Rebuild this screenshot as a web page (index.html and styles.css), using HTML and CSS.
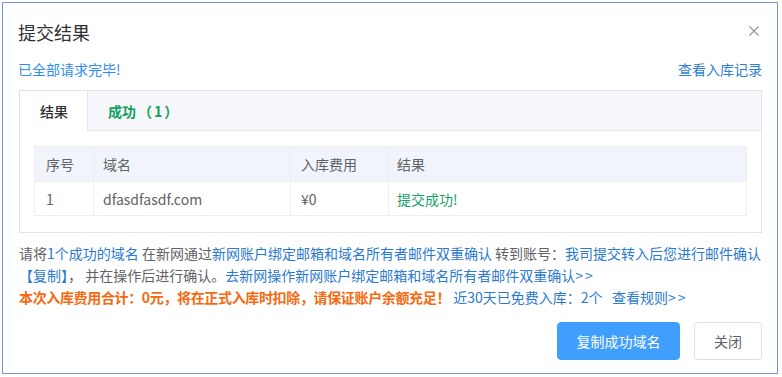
FILE: index.html
```html
<!DOCTYPE html>
<html lang="zh-CN">
<head>
<meta charset="utf-8">
<link rel="stylesheet" href="styles.css">
</head>
<body>
<div class="dialog">
  <div class="dlg-header">
    <span class="dlg-title">提交结果</span>
    <span class="dlg-close"><svg width="10" height="10" viewBox="0 0 10 10"><path d="M0.5 0.5L9.5 9.5M9.5 0.5L0.5 9.5" stroke="#909399" stroke-width="1.1" fill="none"/></svg></span>
  </div>
  <div class="status-row">
    <span class="status">已全部请求完毕!</span>
    <span class="record-link">查看入库记录</span>
  </div>
  <div class="tabs">
    <div class="tab-head">
      <div class="tab active">结果</div>
      <div class="tab success">成功<span class="paren">（</span>1<span class="paren">）</span></div>
    </div>
    <div class="tab-body">
      <table class="result-table">
        <thead>
          <tr><th class="c1">序号</th><th class="c2">域名</th><th class="c3">入库费用</th><th>结果</th></tr>
        </thead>
        <tbody>
          <tr><td>1</td><td>dfasdfasdf.com</td><td>¥0</td><td class="ok">提交成功!</td></tr>
        </tbody>
      </table>
    </div>
  </div>
  <div class="notes">
    <p>请将<span class="lk">1个成功的域名</span> 在新网通过<span class="lk">新网账户绑定邮箱和域名所有者邮件双重确认</span> 转到账号：<span class="lk">我司提交转入后您进行邮件确认</span><span class="lk">【复制】</span>， 并在操作后进行确认。<span class="lk">去新网操作新网账户绑定邮箱和域名所有者邮件双重确认<span class="gt">&gt;&gt;</span></span></p>
    <p><span class="warn">本次入库费用合计：0元，将在正式入库时扣除，请保证账户余额充足！</span> <span class="lk">近30天已免费入库：2个</span> &nbsp; <span class="lk">查看规则<span class="gt">&gt;&gt;</span></span></p>
  </div>
  <div class="footer">
    <button class="btn primary">复制成功域名</button>
    <button class="btn plain">关闭</button>
  </div>
</div>
</body>
</html>
```

FILE: styles.css
```css
* { box-sizing: border-box; }
html, body { margin: 0; padding: 0; background: #ffffff; }
body {
  padding: 2px;
  font-family: "Noto Sans CJK SC", "Noto Sans", sans-serif;
  color: #606266;
}
.dialog {
  width: 776px;
  height: 372px;
  border: 1px solid #7595d8;
  background: #fff;
  padding: 17px 15px 0 16px;
  display: flex;
  flex-direction: column;
}
.dlg-header {
  display: flex;
  justify-content: space-between;
  align-items: center;
  height: 24px;
}
.dlg-title {
  font-size: 18px;
  line-height: 24px;
  color: #303133;
  margin-left: -1px;
}
.dlg-close {
  display: flex;
  margin-right: 3px;
  margin-top: -2px;
}
.status-row {
  margin-top: 15px;
  display: flex;
  justify-content: space-between;
  font-size: 14px;
  line-height: 20px;
}
.status { color: #2f8cf2; margin-left: -1px; }
.record-link { color: #2d7fcf; }
.tabs {
  margin-top: 11px;
  border: 1px solid #dfe3ea;
  display: flex;
  flex-direction: column;
}
.tab-head {
  display: flex;
  background: #f5f7fa;
  border-bottom: 1px solid #e4e7ed;
  height: 40px;
}
.tab {
  padding: 0 20px;
  font-size: 14px;
  line-height: 40px;
  font-weight: bold;
  margin-bottom: -1px;
  white-space: nowrap;
}
.tab.active {
  background: #fff;
  color: #303133;
  border-right: 1px solid #e4e7ed;
  height: 40px;
  padding: 0 19px 0 20px;
  font-weight: 500;
}
.tab.success { color: #16a05d; }
.tab .paren { display: inline-block; width: 14px; text-align: center; margin: 0 2px; }
.tab-body {
  padding: 15px 14px 16px 14px;
}
.result-table {
  width: 100%;
  border-collapse: collapse;
  font-size: 14px;
  border: 1px solid #ebeef5;
}
.result-table th, .result-table td {
  border: 1px solid #ebeef5;
  text-align: left;
  font-weight: normal;
  padding: 0 11px;
}
.result-table th {
  background: #f1f5fb;
  height: 35px;
  color: #606266;
}
.result-table td {
  height: 34px;
  color: #606266;
}
.result-table .c1 { width: 59px; }
.result-table .c2 { width: 197px; padding-left: 9px; }
.result-table .c3 { width: 98px; padding-left: 10px; }
.result-table td:nth-child(2) { padding-left: 9px; }
.result-table td:nth-child(3) { padding-left: 10px; }
.result-table td:nth-child(4) { padding-left: 8px; }
.result-table th:nth-child(4) { padding-left: 8px; }
.result-table .ok { color: #15a267; }
.notes {
  margin-top: 9px;
  font-size: 14px;
  line-height: 22px;
  color: #606266;
}
.notes p { margin: 0; }
.lk { color: #2b79d0; }
.gt { letter-spacing: 2px; }
.warn { color: #f7690f; font-weight: bold; letter-spacing: -0.35px; }
.footer {
  margin-top: 14px;
  display: flex;
  justify-content: flex-end;
  gap: 14px;
}
.btn {
  height: 38px;
  font-family: inherit;
  font-size: 14px;
  border-radius: 4px;
  padding: 0;
  white-space: nowrap;
  cursor: pointer;
}
.btn.primary {
  background: #409eff;
  border: 1px solid #409eff;
  color: #fff;
  width: 123px;
}
.btn.plain {
  background: #fff;
  border: 1px solid #dcdfe6;
  color: #606266;
  width: 68px;
}
```
